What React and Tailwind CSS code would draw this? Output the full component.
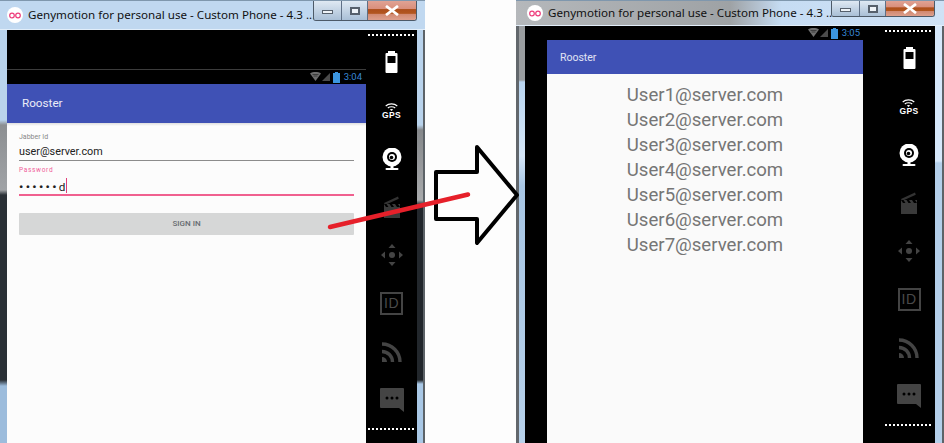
import React from 'react';

const USERS = ['User1', 'User2', 'User3', 'User4', 'User5', 'User6', 'User7'];

function AppLogo() {
  return (
    <svg width="16" height="16" viewBox="0 0 16 16" className="shrink-0">
      <circle cx="8" cy="8" r="8" fill="#fff" />
      <circle cx="5" cy="8.5" r="2.3" fill="none" stroke="#ee3d7c" strokeWidth="1.2" />
      <circle cx="11" cy="8.5" r="2.3" fill="none" stroke="#ee3d7c" strokeWidth="1.2" />
    </svg>
  );
}

function WindowButtons({ height }) {
  return (
    <div className={`flex ${height} self-start shrink-0 rounded-b-[3px] border border-t-0 border-[#4d5a68] overflow-hidden`}>
      <div className="w-[28px] flex items-center justify-center bg-gradient-to-b from-[#dfe9f3] to-[#a9bfd6] border-r border-[#5f7086]">
        <div className="w-[11px] h-[4px] mt-[3px] bg-[#eef3f8] border border-[#56606c]" />
      </div>
      <div className="w-[26px] flex items-center justify-center bg-gradient-to-b from-[#dfe9f3] to-[#a9bfd6] border-r border-[#5f7086]">
        <div className="w-[10px] h-[8px] bg-[#eef3f8] border-2 border-[#56606c]" />
      </div>
      <div className="w-[48px] flex items-center justify-center bg-[linear-gradient(#e0a294_0%,#d98f7c_40%,#ad4f1c_45%,#b2561f_65%,#d28a72_70%,#dd9f8c_100%)]">
        <svg width="16" height="11" viewBox="0 0 16 11">
          <path d="M2 1l12 9M14 1L2 10" stroke="#fff" strokeWidth="2.8" />
        </svg>
      </div>
    </div>
  );
}

function TitleBar({ className, pad, buttonsHeight }) {
  return (
    <div className={`flex items-center border-t border-t-[#7f97ad] border-b border-b-[#e2eefa] ${className}`}>
      <div className={`flex items-center gap-[5px] ${pad} flex-1 min-w-0`}>
        <AppLogo />
        <span className="text-[11.6px] leading-none text-[#111] whitespace-nowrap font-['Noto_Sans',sans-serif]">
          Genymotion for personal use - Custom Phone - 4.3 ...
        </span>
      </div>
      <WindowButtons height={buttonsHeight} />
    </div>
  );
}

function StatusIcons({ time, className }) {
  return (
    <div className={`flex items-center justify-end gap-[2px] bg-black ${className}`}>
      <svg width="21" height="10" viewBox="0 0 21 10">
        <path d="M0 1.500C3 -.4 8 -.4 11 1.500L5.500 9z" fill="#6e6e6e" />
        <path d="M2.500 2.500h6M3.500 4h4" stroke="#2a2a2a" strokeWidth=".7" />
        <path d="M20 1v8h-8z" fill="#4b4b4b" />
      </svg>
      <svg width="7" height="11" viewBox="0 0 7 11">
        <path d="M2 0h3v1h2v10H0V1h2z" fill="#3c96e0" />
      </svg>
      <span className="ml-[2px] text-[9.5px] leading-none text-[#3787d6] font-['Roboto',sans-serif]">{time}</span>
    </div>
  );
}

function BatteryIcon() {
  return (
    <svg width="13" height="22" viewBox="0 0 13 22">
      <path d="M3 0h7v2h1.500a1 1 0 0 1 1 1v18a1 1 0 0 1-1 1h-10a1 1 0 0 1-1-1V3a1 1 0 0 1 1-1H3z" fill="#fff" />
      <rect x="2.500" y="5" width="8" height="7" fill="#000" />
    </svg>
  );
}

function GpsIcon() {
  return (
    <div className="flex flex-col items-center mt-[2px]">
      <svg width="13" height="8" viewBox="0 0 13 8">
        <path d="M.7 3C3.800 .2 9.200 .2 12.300 3M2.800 5c2-1.700 5.400-1.700 7.400 0" fill="none" stroke="#fff" strokeWidth="1.100" />
        <path d="M4.800 6.600c1-.7 2.400-.7 3.400 0L6.500 8z" fill="#fff" />
      </svg>
      <span className="text-[8.5px] leading-[9px] font-bold tracking-[.3px] text-white font-['Liberation_Sans',sans-serif]">GPS</span>
    </div>
  );
}

function WebcamIcon() {
  return (
    <svg width="20" height="22" viewBox="0 0 20 22">
      <circle cx="10" cy="9" r="9.500" fill="#fff" />
      <circle cx="10" cy="9" r="5" fill="#000" />
      <circle cx="10" cy="9" r="3" fill="#fff" />
      <circle cx="9.500" cy="9.500" r="1.800" fill="#000" />
      <rect x="8.500" y="18" width="3" height="2" fill="#fff" />
      <rect x="3.500" y="20" width="13" height="2" rx="1" fill="#fff" />
    </svg>
  );
}

function ClapperIcon() {
  return (
    <svg width="16" height="22" viewBox="0 0 16 22">
      <path d="M0 8h16v14H0z" fill="#3a3a3a" />
      <path d="M0 7l14-6.500.8 2.200L1 9z" fill="#333" />
      <path d="M0 8l2 3h2.500l-2-3zM5.500 8l2 3H10L8 8zM11 8l2 3h3L14 8z" fill="#000" />
    </svg>
  );
}

function DpadIcon() {
  return (
    <svg width="22" height="22" viewBox="0 0 22 22" fill="#444">
      <path d="M11 0l3.500 4h-7zM11 22l-3.500-4h7zM0 11l4-3.500v7zM22 11l-4 3.500v-7z" />
      <circle cx="11" cy="11" r="3" />
    </svg>
  );
}

function IdIcon() {
  return (
    <div className="w-[23px] h-[23px] flex items-center justify-center gap-[1px] border-2 border-[#444]">
      <span className="text-[14px] leading-none tracking-[.5px] text-[#4a4a4a] font-['Liberation_Sans',sans-serif]">ID</span>
    </div>
  );
}

function RssIcon() {
  return (
    <svg width="20" height="20" viewBox="0 0 20 20" fill="none" stroke="#444" strokeWidth="3.400">
      <path d="M0 9.500A10.500 10.500 0 0 1 10.500 20" />
      <path d="M0 2A18 18 0 0 1 18 20" />
      <path d="M0 20v-5a5 5 0 0 1 5 5z" fill="#444" stroke="none" />
    </svg>
  );
}

function ChatIcon() {
  return (
    <svg width="24" height="24" viewBox="0 0 24 24">
      <path d="M1 0h22a1 1 0 0 1 1 1v23l-5-4H1a1 1 0 0 1-1-1V1a1 1 0 0 1 1-1z" fill="#444" />
      <circle cx="7" cy="10" r="1.500" fill="#000" />
      <circle cx="12" cy="10" r="1.500" fill="#000" />
      <circle cx="17" cy="10" r="1.500" fill="#000" />
    </svg>
  );
}

function DotRow({ className }) {
  return (
    <div className={`flex gap-[2px] ${className}`}>
      {Array.from({ length: 12 }).map((_, i) => (
        <span key={i} className="w-[2px] h-[2px] bg-white" />
      ))}
    </div>
  );
}

const SIDE_ICONS = [BatteryIcon, GpsIcon, WebcamIcon, ClapperIcon, DpadIcon, IdIcon, RssIcon, ChatIcon];

function Sidebar({ className }) {
  return (
    <div className={`flex flex-col w-[51px] shrink-0 bg-black ${className}`}>
      <DotRow className="mt-[4px] ml-[2px]" />
      <div className="mt-[2px]">
        {SIDE_ICONS.map((Icon, i) => (
          <div key={i} className="h-[48.25px] flex items-center justify-center">
            <Icon />
          </div>
        ))}
      </div>
      <DotRow className="mt-[4px] ml-[2px]" />
    </div>
  );
}

function LoginScreen() {
  return (
    <div className="w-[359px] shrink-0 flex flex-col bg-black">
      <div className="h-[39px]" />
      <div className="h-px bg-[#3c3c3c]" />
      <StatusIcons time="3:04" className="h-[14px] pr-[4px]" />
      <div className="h-[39px] flex items-center pl-[15px] pt-[1px] bg-[#3f51b5]">
        <span className="text-[11.7px] text-white/90 font-['Roboto',sans-serif]">Rooster</span>
      </div>
      <div className="flex-1 flex flex-col px-[12px] bg-[#fcfcfc] font-['Roboto',sans-serif]">
        <div className="-mx-[12px] h-[3px] bg-gradient-to-b from-[#dedede] to-[#fcfcfc]" />
        <div className="mt-[8px] h-[7px] text-[7px] leading-[7px] text-[#888]">Jabber Id</div>
        <div className="mt-[2px] h-[18px] border-b border-[#8c8c8c] text-[10.8px] leading-[18px] text-[#222]">user@server.com</div>
        <div className="mt-[6px] h-[7px] text-[6.5px] leading-[7px] tracking-[.7px] text-[#f0609a]">Password</div>
        <div className="h-[22px] flex items-start border-b-2 border-[#f0608f] text-[11.8px] leading-[26px] text-[#222]">
          <span className="tracking-[2.4px] font-bold">••••••</span>
          <span>d</span>
          <span className="w-px h-[15px] mt-[4px] bg-[#e0407a]" />
        </div>
        <div className="mt-[17px] h-[22px] flex items-center justify-center rounded-[1px] bg-[#d6d7d7] text-[8px] font-medium text-[#666b70]">
          SIGN IN
        </div>
      </div>
    </div>
  );
}

function RosterScreen() {
  return (
    <div className="w-[316px] shrink-0 flex flex-col bg-black">
      <StatusIcons time="3:05" className="h-[14px] pr-[3px]" />
      <div className="h-[34px] flex items-center pl-[13px] pt-[1px] bg-[#3f51b5]">
        <span className="text-[10.5px] text-white/85 font-['Roboto',sans-serif]">Rooster</span>
      </div>
      <div className="flex-1 flex flex-col items-center pt-[9px] bg-[#fafafa]">
        {USERS.map((user) => (
          <div key={user} className="h-[25px] text-[18.6px] leading-[25px] text-[#757575] font-['Roboto',sans-serif]">
            {user}@server.com
          </div>
        ))}
      </div>
    </div>
  );
}

export default function App() {
  return (
    <div className="relative flex w-[944px] h-[443px] overflow-hidden bg-[#fdfdfd]">
      {/* Left window */}
      <div className="w-[425px] shrink-0 flex flex-col">
        <TitleBar className="h-[30px] bg-[#c0d8f0]" pad="pl-[7px]" buttonsHeight="h-[20px] mr-[8px]" />
        <div className="flex flex-1 min-h-0">
          <div className="w-[7px] bg-[linear-gradient(#b9d3ec_90px,#8c8f92_95px,#a0a3a6_160px,#2a3036_165px,#2a3036_350px,#9cbcdc_356px)]" />
          <div className="flex w-[410px]">
            <LoginScreen />
            <Sidebar />
          </div>
          <div className="w-[6px] bg-[linear-gradient(#b9d3ec_95px,#85888b_100px,#a8aaac_170px,#22272c_175px,#22272c_350px,#a9c8e6_354px)]" />
          <div className="w-[2px] bg-[#5d6368]" />
        </div>
      </div>

      {/* Gap between the windows */}
      <div className="flex-1" />

      {/* Right window */}
      <div className="w-[428px] shrink-0 flex flex-col">
        <TitleBar
          className="h-[26px] bg-[linear-gradient(90deg,#b5b8bb_0%,#9ea2a5_50%,#c6dcf3_62%,#cfe2f6_100%)]"
          pad="pl-[11px]"
          buttonsHeight="h-[16px] mr-[9px]"
        />
        <div className="flex flex-1 min-h-0">
          <div className="w-[3px] bg-[#62676c]" />
          <div className="w-[6px] bg-[linear-gradient(#9a9da0_54px,#b9d5f0_56px,#d6e7f8_130px,#a8c6e4_160px,#b7d1ea_100%)]" />
          <div className="flex w-[410px] bg-black">
            <div className="w-[22px] shrink-0" />
            <RosterScreen />
            <Sidebar className="!w-[72px] pl-[20px]" />
          </div>
          <div className="w-[7px] bg-[linear-gradient(#d6e8fb_135px,#b4cfea_137px,#b4cfea_100%)]" />
          <div className="w-[2px] bg-[#5d6368]" />
        </div>
      </div>

      {/* Hand-drawn arrow and line on top of the screenshots */}
      <svg className="absolute inset-0 pointer-events-none" width="944" height="443" viewBox="0 0 944 443">
        <path
          d="M436 172H477V147L517 195L477 243V219H436Z"
          fill="none"
          stroke="#000"
          strokeWidth="4"
          strokeLinejoin="round"
        />
        <path d="M330 227L468 194.500" stroke="#e6202a" strokeWidth="4.500" strokeLinecap="round" />
      </svg>
    </div>
  );
}
